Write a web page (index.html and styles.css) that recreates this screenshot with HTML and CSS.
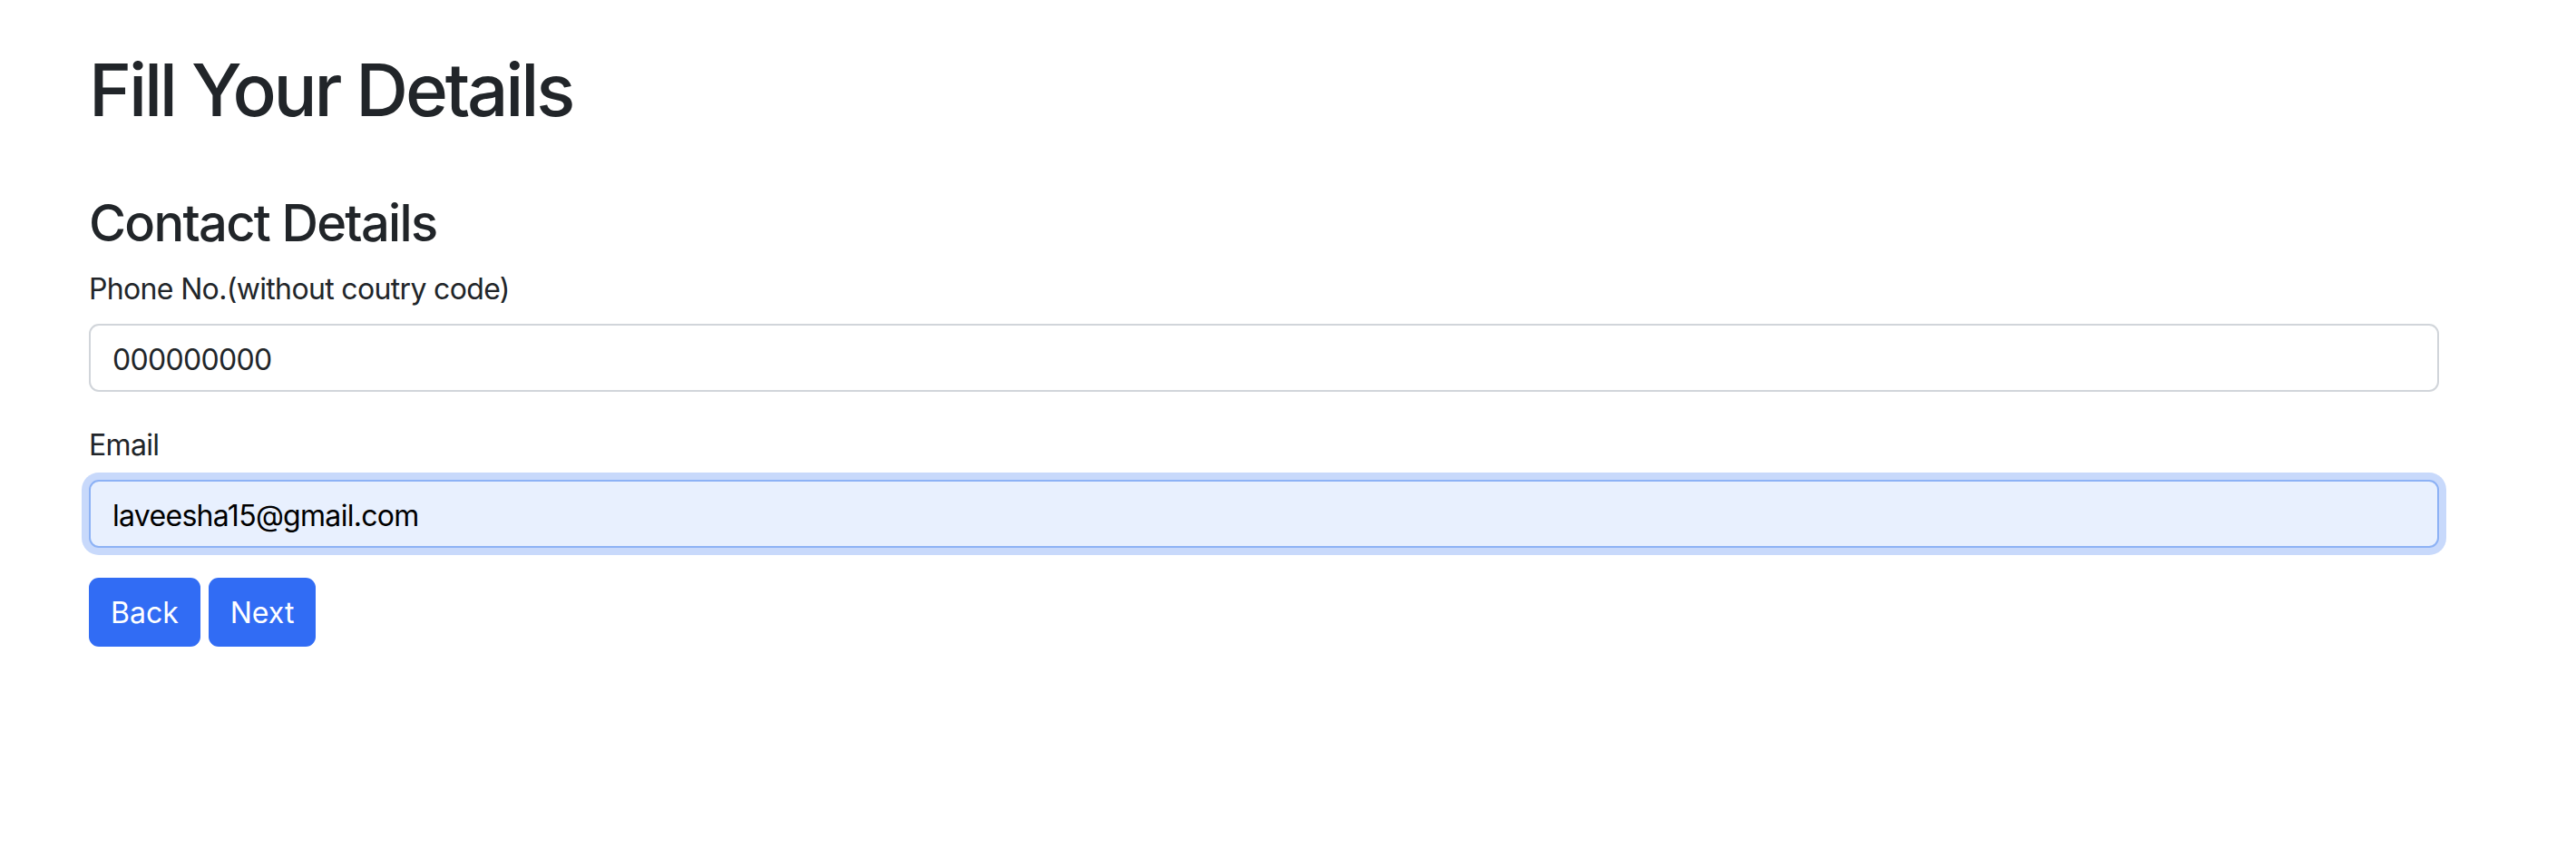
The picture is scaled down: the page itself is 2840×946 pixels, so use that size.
FILE: index.html
```html
<!DOCTYPE html>
<html lang="en">
<head>
<meta charset="utf-8">
<title>Fill Your Details</title>
<link rel="stylesheet" href="styles.css">
</head>
<body>
<main class="container">
  <h1 class="title">Fill Your Details</h1>
  <form class="form">
    <h3 class="section-title">Contact Details</h3>
    <div class="field">
      <label class="label" for="phone">Phone No.(without coutry code)</label>
      <input class="input" id="phone" type="text" value="000000000">
    </div>
    <div class="field">
      <label class="label" for="email">Email</label>
      <input class="input input-focused" id="email" type="text" value="laveesha15@gmail.com">
    </div>
    <div class="actions">
      <button type="button" class="btn">Back</button>
      <button type="button" class="btn">Next</button>
    </div>
  </form>
</main>
</body>
</html>
```

FILE: styles.css
```css
* { box-sizing: border-box; }
html, body {
  margin: 0;
  background: #ffffff;
}
body {
  font-family: Inter, "Liberation Sans", Arial, sans-serif;
  color: #212529;
}
.container {
  padding: 51px 151px 0 98px;
}
.title {
  margin: 0 0 66px 0;
  font-size: 80px;
  line-height: 96px;
  font-weight: 500;
  letter-spacing: -3.2px;
}
.form {
  display: flex;
  flex-direction: column;
}
.section-title {
  margin: 0 0 13px 0;
  font-size: 56px;
  line-height: 67px;
  font-weight: 500;
  letter-spacing: -1.7px;
}
.field {
  display: flex;
  flex-direction: column;
  margin-bottom: 33px;
}
.label {
  font-size: 32px;
  line-height: 48px;
  padding-top: 2px;
  margin-bottom: 14px;
  letter-spacing: -0.66px;
}
.input {
  height: 75px;
  width: 100%;
  padding: 3px 24px 0 24px;
  font-family: inherit;
  font-size: 32px;
  letter-spacing: -0.7px;
  color: #212529;
  background: #ffffff;
  border: 2px solid #d1d5da;
  border-radius: 11px;
  outline: none;
}
.input-focused {
  color: #000000;
  background: #e8f0fe;
  border-color: #8db2f5;
  box-shadow: 0 0 0 8px #c8d9fb;
}
.actions {
  display: flex;
  gap: 9px;
}
.btn {
  height: 76px;
  padding: 0 24px;
  font-family: inherit;
  font-size: 32px;
  color: #ffffff;
  background: #316cf4;
  border: none;
  border-radius: 11px;
}
```
